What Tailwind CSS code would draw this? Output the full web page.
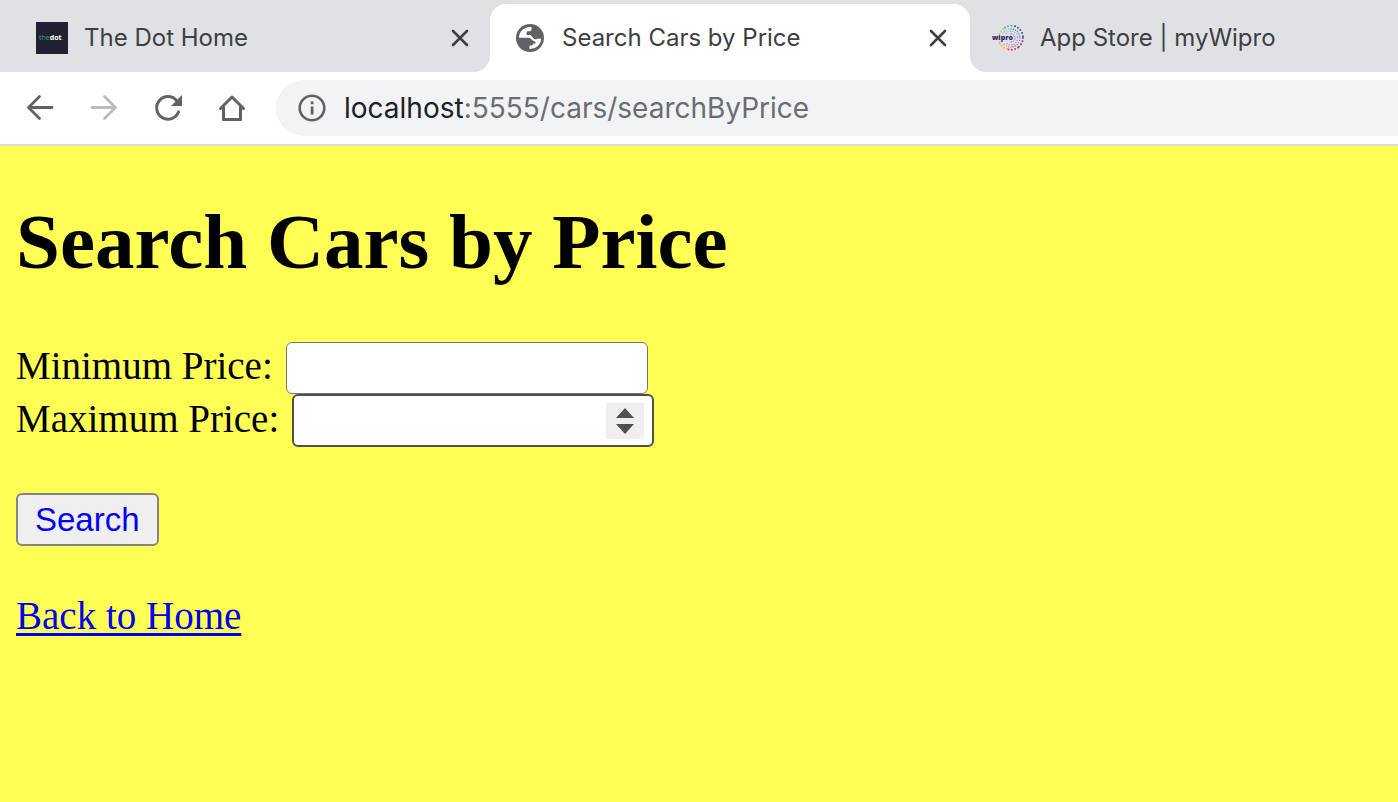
<!DOCTYPE html>
<html lang="en">
<head>
<meta charset="utf-8">
<title>Search Cars by Price</title>
<script src="https://cdn.jsdelivr.net/npm/@tailwindcss/browser@4"></script>
</head>
<body class="flex min-h-screen flex-col bg-[#ffff54] font-['Liberation_Serif',serif] text-black">
<header class="bg-white font-['Inter',sans-serif] text-[#3c4043]">
  <nav class="flex h-[72px] text-2xl" aria-label="Tabs">
    <div class="flex w-[490px] shrink-0 items-center rounded-br-2xl bg-[#dfe1e5] pt-1 pl-9 pr-5">
      <svg class="size-8 shrink-0" viewBox="0 0 32 32" aria-hidden="true">
        <rect width="32" height="32" fill="#202231"/>
        <text x="3" y="18" font-family="Open Sans, sans-serif" font-size="7" fill="#38a090">the<tspan fill="#fff" font-weight="700">dot</tspan>.</text>
      </svg>
      <span class="ml-4 grow whitespace-nowrap">The Dot Home</span>
      <button type="button" class="size-5" aria-label="Close The Dot Home">
        <svg viewBox="0 0 20 20" fill="none" stroke="#3c4043" stroke-width="2.6" stroke-linecap="round"><path d="M3 3l14 14M17 3L3 17"/></svg>
      </button>
    </div>
    <div class="flex w-[480px] shrink-0 bg-[#dfe1e5] pt-1">
      <div class="flex grow items-center rounded-t-2xl bg-white pl-[26px] pr-[22px]">
        <svg class="size-7 shrink-0" viewBox="0 0 28 28" aria-hidden="true">
          <circle cx="14" cy="14" r="14" fill="#5f6368"/>
          <path d="M2.900 13.800A11.100 11.100 0 0 1 15.500 3V5.200C15.500 6.600 14.500 7.300 13 7.300C11.300 7.300 10.600 7.800 10.600 9.200V11H15C16 11 16.400 11.600 16.800 12.800C17.200 14 18 14.400 19.300 14.400H25.100A11.100 11.100 0 0 1 13.500 25.100V21.500H15C16.400 21.500 17 20.800 17.200 19.700H18.800C19.500 19.300 19.700 18.600 19.500 17.700L17 16.800L15.500 15.500C14.500 14.400 13.500 13.800 12 13.800Z" fill="#fff"/>
          <path d="M14.500 11H15.700L17.200 9.500C18 7.500 20 5.500 20.500 5L25 12.500V14.300H22L20.500 15.200H18.500L16.500 13.200ZM11.500 14H13L15.500 16.200V19.500H13.500L13 21.500L11.500 20Z" fill="#5f6368"/>
        </svg>
        <span class="ml-[18px] grow whitespace-nowrap">Search Cars by Price</span>
        <button type="button" class="size-5" aria-label="Close Search Cars by Price">
          <svg viewBox="0 0 20 20" fill="none" stroke="#3c4043" stroke-width="2.6" stroke-linecap="round"><path d="M3 3l14 14M17 3L3 17"/></svg>
        </button>
      </div>
    </div>
    <div class="flex min-w-0 grow items-center rounded-bl-2xl bg-[#dfe1e5] pt-1 pl-[22px]">
      <svg class="size-8 shrink-0" viewBox="0 0 32 32" aria-hidden="true">
        <g fill="none" stroke-width="2" stroke-linecap="round" stroke-dasharray="0 3.300">
          <path d="M7.500 12A12 12 0 0 1 13 5.500" stroke="#b5d36a"/>
          <path d="M13 5.500A12 12 0 0 1 23 4.300" stroke="#56aacb"/>
          <path d="M23 4.300A12 12 0 0 1 31 16" stroke="#355aa6"/>
          <path d="M31 16A12 12 0 0 1 26 25.500" stroke="#7d3c91"/>
          <path d="M26 25.500A12 12 0 0 1 15 27" stroke="#d63c75"/>
          <path d="M15 27A12 12 0 0 1 7.500 20.500" stroke="#eab45c"/>
        </g>
        <g fill="none" stroke-width="1.400" stroke-linecap="round" stroke-dasharray="0 2.400">
          <path d="M11 11A9 9 0 0 1 19 7" stroke="#73c4a5"/>
          <path d="M19 7A9 9 0 0 1 28 16" stroke="#548ac4"/>
          <path d="M28 16A9 9 0 0 1 19 25" stroke="#9b65ae"/>
          <path d="M19 25A9 9 0 0 1 11 21" stroke="#e68a82"/>
          <path d="M14 11.500A6.500 6.500 0 0 1 25.500 16" stroke="#77b8da"/>
          <path d="M25.500 16A6.500 6.500 0 0 1 14 20.500" stroke="#bd83b5"/>
          <path d="M19 12A4 4 0 0 1 19 20" stroke="#928bc0"/>
        </g>
        <text x="0" y="18" font-family="Open Sans, sans-serif" font-size="7" font-weight="800" fill="#37275c">wipro</text>
      </svg>
      <span class="ml-4 whitespace-nowrap">App Store | myWipro</span>
    </div>
  </nav>
  <div class="flex items-center border-b-2 border-[#dadce0] py-2 pl-6">
    <button type="button" class="size-8" aria-label="Back">
      <svg viewBox="0 0 32 32" fill="none" stroke="#5f6368" stroke-width="2.800" stroke-linecap="round" stroke-linejoin="round"><path d="M28 15.500H4.500M15.500 4.500L4.500 15.500L15.500 26.500"/></svg>
    </button>
    <button type="button" class="ml-8 size-8" aria-label="Forward">
      <svg viewBox="0 0 32 32" fill="none" stroke="#babcbe" stroke-width="2.800" stroke-linecap="round" stroke-linejoin="round"><path d="M4 15.500H27.500M16.500 4.500L27.500 15.500L16.500 26.500"/></svg>
    </button>
    <button type="button" class="ml-8 size-8" aria-label="Reload">
      <svg viewBox="0 0 32 32" fill="none" stroke="#5f6368" stroke-width="3"><path d="M26.500 20A11.300 11.300 0 1 1 24.500 8.500" stroke-linecap="round"/><path d="M30 3V14H19Z" fill="#5f6368" stroke="none"/></svg>
    </button>
    <button type="button" class="ml-8 size-8" aria-label="Home">
      <svg viewBox="0 0 32 32" fill="none" stroke="#5f6368" stroke-width="3" stroke-linecap="round" stroke-linejoin="round"><path d="M4.500 16.500L16 5L27.500 16.500M7.500 15V27.500H24.500V15"/></svg>
    </button>
    <div class="ml-7 flex h-14 grow items-center rounded-l-full bg-[#f1f3f4] pl-[22px]">
      <svg class="size-7 shrink-0" viewBox="0 0 28 28" aria-hidden="true"><circle cx="14" cy="14" r="12.300" fill="none" stroke="#5f6368" stroke-width="2.600"/><path d="M12.700 12.500h2.800v8h-2.800zM12.700 7.500h2.800v2.800h-2.800z" fill="#5f6368"/></svg>
      <span class="ml-[18px] text-[28px] whitespace-nowrap text-[#6a6d71]"><span class="text-[#202124]">localhost</span>:5555/cars/searchByPrice</span>
    </div>
  </div>
</header>
<main class="px-4 pt-[50px] text-[39px] leading-[52px]">
  <h1 class="text-[79px] leading-[92px] font-bold">Search Cars by Price</h1>
  <form class="mt-[54px]">
    <div class="flex items-center gap-[13px]">
      <label for="min" class="leading-[48px] pb-1">Minimum Price:</label>
      <input id="min" type="text" inputmode="numeric" class="h-[52px] w-[362px] rounded-md border border-[#767676] bg-white px-2 text-[33px] outline-none">
    </div>
    <div class="flex items-center gap-[13px]">
      <label for="max" class="leading-[48px] pb-1">Maximum Price:</label>
      <div class="flex h-[53px] w-[362px] items-center rounded-md border-2 border-[#4f4f4f] bg-white pr-2">
        <input id="max" type="text" inputmode="numeric" class="h-full min-w-0 grow bg-transparent px-2 text-[33px] outline-none">
        <div class="flex h-9 w-[38px] shrink-0 flex-col items-center justify-center gap-[6px] bg-[#efefef]">
          <button type="button" class="h-[10px] w-[18px]" aria-label="Increase"><svg class="block" viewBox="0 0 18 10" fill="#505050"><path d="M0 10L9 0L18 10Z"/></svg></button>
          <button type="button" class="h-[10px] w-[18px]" aria-label="Decrease"><svg class="block" viewBox="0 0 18 10" fill="#505050"><path d="M0 0L9 10L18 0Z"/></svg></button>
        </div>
      </div>
    </div>
    <button type="submit" class="mt-[46px] flex h-[53px] items-center rounded-md border-2 border-[#858585] bg-[#efefef] px-[17px] font-['Liberation_Sans',sans-serif] text-[33px] text-[#0000ff]">Search</button>
  </form>
  <a href="#" class="mt-11 inline-block text-[#0000ee] underline decoration-[3px] underline-offset-[4px]">Back to Home</a>
</main>
</body>
</html>
